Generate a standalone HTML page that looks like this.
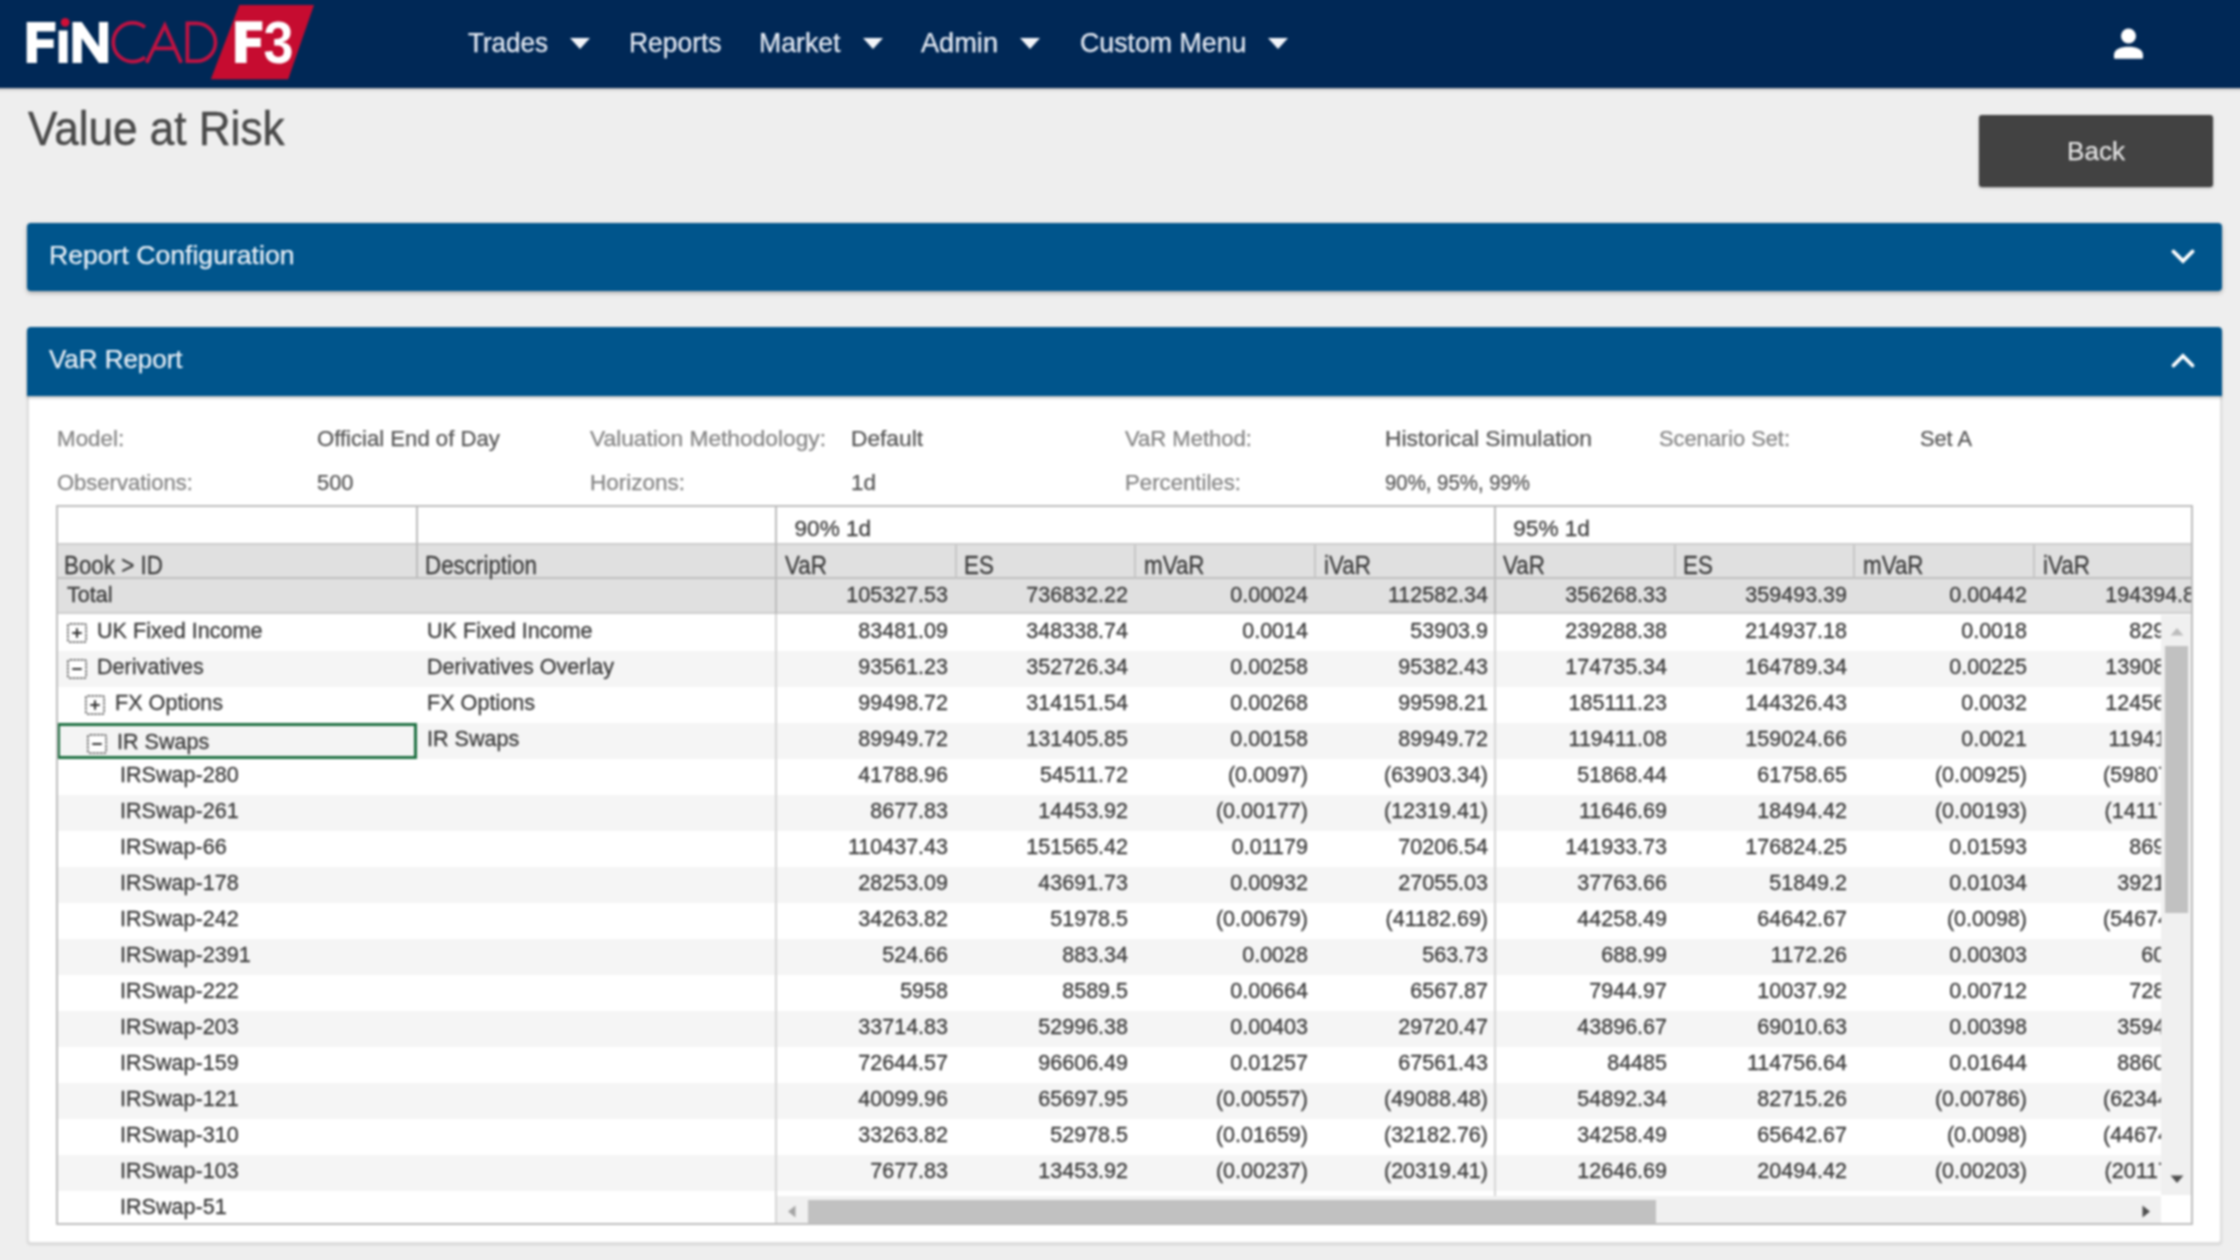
<!DOCTYPE html>
<html><head><meta charset="utf-8"><title>Value at Risk</title>
<style>
html,body{margin:0;padding:0;width:2240px;height:1260px;overflow:hidden}
body{width:2240px;height:1260px;overflow:hidden;background:#eeeeee;font-family:"Liberation Sans",sans-serif;position:relative}
.a{position:absolute;display:block}
.t{position:absolute;white-space:pre;line-height:1;transform-origin:0 50%;display:block;-webkit-text-stroke:0.25px currentColor}
.d{position:absolute;white-space:pre;line-height:1;font-size:22.2px;color:#3a3a3a;-webkit-text-stroke:0.3px #3a3a3a;display:block;transform:scaleX(0.9730);transform-origin:0 50%}
.h{position:absolute;white-space:pre;line-height:1;font-size:25px;color:#3c3c3c;-webkit-text-stroke:0.3px #3c3c3c;display:block;transform-origin:0 50%}
.r{text-align:right;width:200px}
.n{font-size:22px;transform:scaleX(0.9773);transform-origin:100% 50%}
#v{position:absolute;left:0;top:0;width:2240px;height:1260px;overflow:hidden}
#w{position:absolute;left:-50px;top:-50px;width:2340px;height:1360px;background:#eeeeee;filter:blur(0.9px)}
#c{position:absolute;left:50px;top:50px;width:2240px;height:1260px}
</style></head><body>
<div id="v"><div id="w"><div id="c">
<!-- NAVBAR -->
<div class="a" style="left:-50px;top:-50px;width:2340px;height:137.5px;background:#002856;box-shadow:0 1px 3px rgba(0,0,0,.35)"></div>
<svg class="a" style="left:0;top:0" width="340" height="87" viewBox="0 0 340 87">
  <path d="M239.3 5H314L288.2 79.2H210.8Z" fill="#c60c30"/>
  <g fill="#ffffff">
    <path d="M26.7 22H55.4V31.4H36.9V39.3H53.7V48H36.9V63H26.7Z"/>
    <path d="M58.6 30.5H67.6V63H58.6Z"/>
    <path d="M72.5 22H81.8L98.9 46.8V22H108.1V63H98.9L81.8 38.2V63H72.5Z"/>
    <path d="M235.2 21.3H262.3V30.6H246.6V38H260.8V46.9H246.6V63H235.2Z"/>
  </g>
  <circle cx="65.2" cy="22.3" r="4.4" fill="#d00f37"/>
  <g fill="none" stroke="#bf1242" stroke-width="3.7">
    <path d="M145 27.3A19.4 19.4 0 1 0 145 57.3"/>
    <path d="M146.6 62.8L164.8 25.4L181.2 62.8M153.6 48.4H176.2" stroke-linejoin="miter"/>
    <path d="M187.4 23.4V61.2H196.6A18.9 18.9 0 0 0 196.6 23.4Z"/>
  </g>
  <text x="263.6" y="63" font-family="Liberation Sans, sans-serif" font-weight="700" font-size="58.5" fill="#ffffff" textLength="30" lengthAdjust="spacingAndGlyphs">3</text>
</svg>
<svg class="a" style="left:570px;top:37.5px" width="20" height="11" viewBox="0 0 20 11"><path d="M0 0H20L10 11Z" fill="#f2f5fa"/></svg><svg class="a" style="left:862.5px;top:37.5px" width="20" height="11" viewBox="0 0 20 11"><path d="M0 0H20L10 11Z" fill="#f2f5fa"/></svg><svg class="a" style="left:1020.3px;top:37.5px" width="20" height="11" viewBox="0 0 20 11"><path d="M0 0H20L10 11Z" fill="#f2f5fa"/></svg><svg class="a" style="left:1267.7px;top:37.5px" width="20" height="11" viewBox="0 0 20 11"><path d="M0 0H20L10 11Z" fill="#f2f5fa"/></svg>
<svg class="a" style="left:2112px;top:26px" width="34" height="36" viewBox="0 0 34 36"><circle cx="16.5" cy="10" r="7.5" fill="#fff"/><path d="M2 31.5V29C2 23 9 20.7 16.5 20.7S31 23 31 29V31.5Q31 32.7 30 32.7H3Q2 32.7 2 31.5Z" fill="#fff"/></svg>
<!-- BACK BUTTON -->
<div class="a" style="left:1979px;top:115px;width:234px;height:72px;background:#424242;border-radius:3px;box-shadow:0 1px 3px rgba(0,0,0,.3)"></div>
<!-- PANEL 1 -->
<div class="a" style="left:27px;top:223px;width:2195px;height:68px;background:#00558c;border-radius:4px;box-shadow:0 2px 4px rgba(0,0,0,.3)"></div>
<svg class="a" style="left:2170px;top:247px" width="26" height="20" viewBox="0 0 26 20"><path d="M3.5 4.5L13 14L22.5 4.5" fill="none" stroke="#fff" stroke-width="3.8" stroke-linecap="round"/></svg>
<!-- PANEL 2 -->
<div class="a" style="left:27px;top:330px;width:2195px;height:914px;background:#fff;border-radius:0 0 4px 4px;border:2px solid #dedede;box-sizing:border-box;box-shadow:0 1px 2px rgba(0,0,0,.12)"></div>
<div class="a" style="left:27px;top:327px;width:2195px;height:68.5px;background:#00558c;border-radius:4px 4px 0 0;box-shadow:0 2px 3px rgba(0,0,0,.25)"></div>
<svg class="a" style="left:2170px;top:350px" width="26" height="20" viewBox="0 0 26 20"><path d="M3.5 15.5L13 6L22.5 15.5" fill="none" stroke="#fff" stroke-width="3.8" stroke-linecap="round"/></svg>
<span class="t" style="left:468.0px;top:29px;font-size:27.5px;color:#e6ecf5;font-weight:400;transform:scaleX(0.9459)">Trades</span><span class="t" style="left:629.0px;top:29px;font-size:27.5px;color:#e6ecf5;font-weight:400;transform:scaleX(0.9606)">Reports</span><span class="t" style="left:759.0px;top:29px;font-size:27.5px;color:#e6ecf5;font-weight:400;transform:scaleX(0.9697)">Market</span><span class="t" style="left:921.0px;top:29px;font-size:27.5px;color:#e6ecf5;font-weight:400;transform:scaleX(0.9878)">Admin</span><span class="t" style="left:1079.5px;top:29px;font-size:27.5px;color:#e6ecf5;font-weight:400;transform:scaleX(0.9726)">Custom Menu</span><span class="t" style="left:28.0px;top:105px;font-size:48px;color:#4a4a4a;font-weight:400;transform:scaleX(0.9186);-webkit-text-stroke-width:0.5px">Value at Risk</span><span class="t" style="left:2067.0px;top:138px;font-size:26.5px;color:#e4e4e4;font-weight:400;transform:scaleX(0.9844)">Back</span><span class="t" style="left:49.0px;top:242px;font-size:26px;color:#e9f0f7;font-weight:400;transform:scaleX(1.0232)">Report Configuration</span><span class="t" style="left:49.0px;top:346px;font-size:26px;color:#e9f0f7;font-weight:400;transform:scaleX(0.9968)">VaR Report</span><span class="t" style="left:56.5px;top:428px;font-size:22px;color:#848484;font-weight:400;transform:scaleX(1.0175)">Model:</span><span class="t" style="left:317.0px;top:428px;font-size:22px;color:#555555;font-weight:400;transform:scaleX(1.0055)">Official End of Day</span><span class="t" style="left:590.0px;top:428px;font-size:22px;color:#848484;font-weight:400;transform:scaleX(1.0337)">Valuation Methodology:</span><span class="t" style="left:851.0px;top:428px;font-size:22px;color:#555555;font-weight:400;transform:scaleX(1.0327)">Default</span><span class="t" style="left:1125.0px;top:428px;font-size:22px;color:#848484;font-weight:400;transform:scaleX(1.0017)">VaR Method:</span><span class="t" style="left:1385.0px;top:428px;font-size:22px;color:#555555;font-weight:400;transform:scaleX(1.0387)">Historical Simulation</span><span class="t" style="left:1659.0px;top:428px;font-size:22px;color:#848484;font-weight:400;transform:scaleX(0.9918)">Scenario Set:</span><span class="t" style="left:1920.0px;top:428px;font-size:22px;color:#555555;font-weight:400;transform:scaleX(0.9887)">Set A</span><span class="t" style="left:56.5px;top:472px;font-size:22px;color:#848484;font-weight:400;transform:scaleX(1.0005)">Observations:</span><span class="t" style="left:317.0px;top:472px;font-size:22px;color:#555555;font-weight:400;transform:scaleX(0.9940)">500</span><span class="t" style="left:590.0px;top:472px;font-size:22px;color:#848484;font-weight:400;transform:scaleX(1.0224)">Horizons:</span><span class="t" style="left:851.0px;top:472px;font-size:22px;color:#555555;font-weight:400;transform:scaleX(1.0211)">1d</span><span class="t" style="left:1125.0px;top:472px;font-size:22px;color:#848484;font-weight:400;transform:scaleX(1.0091)">Percentiles:</span><span class="t" style="left:1385.0px;top:472px;font-size:22px;color:#555555;font-weight:400;transform:scaleX(0.9262)">90%, 95%, 99%</span>
<!-- TABLE -->
<div class="a" style="left:56px;top:505px;width:2137px;height:719px;background:#fff"></div>
<div class="a" style="left:0;top:0;width:2192px;height:1223.5px;overflow:hidden">
<div class="a" style="left:57px;top:614.5px;width:2135px;height:36px;background:#ffffff"></div><div class="a" style="left:57px;top:650.5px;width:2135px;height:36px;background:#f5f5f5"></div><div class="a" style="left:57px;top:686.5px;width:2135px;height:36px;background:#ffffff"></div><div class="a" style="left:57px;top:722.5px;width:2135px;height:36px;background:#f5f5f5"></div><div class="a" style="left:57px;top:758.5px;width:2135px;height:36px;background:#ffffff"></div><div class="a" style="left:57px;top:794.5px;width:2135px;height:36px;background:#f5f5f5"></div><div class="a" style="left:57px;top:830.5px;width:2135px;height:36px;background:#ffffff"></div><div class="a" style="left:57px;top:866.5px;width:2135px;height:36px;background:#f5f5f5"></div><div class="a" style="left:57px;top:902.5px;width:2135px;height:36px;background:#ffffff"></div><div class="a" style="left:57px;top:938.5px;width:2135px;height:36px;background:#f5f5f5"></div><div class="a" style="left:57px;top:974.5px;width:2135px;height:36px;background:#ffffff"></div><div class="a" style="left:57px;top:1010.5px;width:2135px;height:36px;background:#f5f5f5"></div><div class="a" style="left:57px;top:1046.5px;width:2135px;height:36px;background:#ffffff"></div><div class="a" style="left:57px;top:1082.5px;width:2135px;height:36px;background:#f5f5f5"></div><div class="a" style="left:57px;top:1118.5px;width:2135px;height:36px;background:#ffffff"></div><div class="a" style="left:57px;top:1154.5px;width:2135px;height:36px;background:#f5f5f5"></div><div class="a" style="left:57px;top:1190.5px;width:2135px;height:36px;background:#ffffff"></div>
<div class="a" style="left:57px;top:722.5px;width:360px;height:36px;box-sizing:border-box;border:3.2px solid #1f7042;background:#f4f4f4"></div>
<div class="a" style="left:0;top:0;width:2160.5px;height:1196px;overflow:hidden">
<span class="d r n" style="left:748.4px;top:620px">83481.09</span><span class="d r n" style="left:928.2px;top:620px">348338.74</span><span class="d r n" style="left:1108.0px;top:620px">0.0014</span><span class="d r n" style="left:1287.8px;top:620px">53903.9</span><span class="d r n" style="left:1467.4px;top:620px">239288.38</span><span class="d r n" style="left:1647.2px;top:620px">214937.18</span><span class="d r n" style="left:1827.0px;top:620px">0.0018</span><span class="d r n" style="left:2006.9px;top:620px">82934.5</span><span class="d r n" style="left:748.4px;top:656px">93561.23</span><span class="d r n" style="left:928.2px;top:656px">352726.34</span><span class="d r n" style="left:1108.0px;top:656px">0.00258</span><span class="d r n" style="left:1287.8px;top:656px">95382.43</span><span class="d r n" style="left:1467.4px;top:656px">174735.34</span><span class="d r n" style="left:1647.2px;top:656px">164789.34</span><span class="d r n" style="left:1827.0px;top:656px">0.00225</span><span class="d r n" style="left:2006.9px;top:656px">139081.23</span><span class="d r n" style="left:748.4px;top:692px">99498.72</span><span class="d r n" style="left:928.2px;top:692px">314151.54</span><span class="d r n" style="left:1108.0px;top:692px">0.00268</span><span class="d r n" style="left:1287.8px;top:692px">99598.21</span><span class="d r n" style="left:1467.4px;top:692px">185111.23</span><span class="d r n" style="left:1647.2px;top:692px">144326.43</span><span class="d r n" style="left:1827.0px;top:692px">0.0032</span><span class="d r n" style="left:2006.9px;top:692px">124561.23</span><span class="d r n" style="left:748.4px;top:728px">89949.72</span><span class="d r n" style="left:928.2px;top:728px">131405.85</span><span class="d r n" style="left:1108.0px;top:728px">0.00158</span><span class="d r n" style="left:1287.8px;top:728px">89949.72</span><span class="d r n" style="left:1467.4px;top:728px">119411.08</span><span class="d r n" style="left:1647.2px;top:728px">159024.66</span><span class="d r n" style="left:1827.0px;top:728px">0.0021</span><span class="d r n" style="left:2006.9px;top:728px">119411.08</span><span class="d r n" style="left:748.4px;top:764px">41788.96</span><span class="d r n" style="left:928.2px;top:764px">54511.72</span><span class="d r n" style="left:1108.0px;top:764px">(0.0097)</span><span class="d r n" style="left:1287.8px;top:764px">(63903.34)</span><span class="d r n" style="left:1467.4px;top:764px">51868.44</span><span class="d r n" style="left:1647.2px;top:764px">61758.65</span><span class="d r n" style="left:1827.0px;top:764px">(0.00925)</span><span class="d r n" style="left:2006.9px;top:764px">(59807.34)</span><span class="d r n" style="left:748.4px;top:800px">8677.83</span><span class="d r n" style="left:928.2px;top:800px">14453.92</span><span class="d r n" style="left:1108.0px;top:800px">(0.00177)</span><span class="d r n" style="left:1287.8px;top:800px">(12319.41)</span><span class="d r n" style="left:1467.4px;top:800px">11646.69</span><span class="d r n" style="left:1647.2px;top:800px">18494.42</span><span class="d r n" style="left:1827.0px;top:800px">(0.00193)</span><span class="d r n" style="left:2006.9px;top:800px">(14117.41)</span><span class="d r n" style="left:748.4px;top:836px">110437.43</span><span class="d r n" style="left:928.2px;top:836px">151565.42</span><span class="d r n" style="left:1108.0px;top:836px">0.01179</span><span class="d r n" style="left:1287.8px;top:836px">70206.54</span><span class="d r n" style="left:1467.4px;top:836px">141933.73</span><span class="d r n" style="left:1647.2px;top:836px">176824.25</span><span class="d r n" style="left:1827.0px;top:836px">0.01593</span><span class="d r n" style="left:2006.9px;top:836px">86912.5</span><span class="d r n" style="left:748.4px;top:872px">28253.09</span><span class="d r n" style="left:928.2px;top:872px">43691.73</span><span class="d r n" style="left:1108.0px;top:872px">0.00932</span><span class="d r n" style="left:1287.8px;top:872px">27055.03</span><span class="d r n" style="left:1467.4px;top:872px">37763.66</span><span class="d r n" style="left:1647.2px;top:872px">51849.2</span><span class="d r n" style="left:1827.0px;top:872px">0.01034</span><span class="d r n" style="left:2006.9px;top:872px">39215.03</span><span class="d r n" style="left:748.4px;top:908px">34263.82</span><span class="d r n" style="left:928.2px;top:908px">51978.5</span><span class="d r n" style="left:1108.0px;top:908px">(0.00679)</span><span class="d r n" style="left:1287.8px;top:908px">(41182.69)</span><span class="d r n" style="left:1467.4px;top:908px">44258.49</span><span class="d r n" style="left:1647.2px;top:908px">64642.67</span><span class="d r n" style="left:1827.0px;top:908px">(0.0098)</span><span class="d r n" style="left:2006.9px;top:908px">(54674.69)</span><span class="d r n" style="left:748.4px;top:944px">524.66</span><span class="d r n" style="left:928.2px;top:944px">883.34</span><span class="d r n" style="left:1108.0px;top:944px">0.0028</span><span class="d r n" style="left:1287.8px;top:944px">563.73</span><span class="d r n" style="left:1467.4px;top:944px">688.99</span><span class="d r n" style="left:1647.2px;top:944px">1172.26</span><span class="d r n" style="left:1827.0px;top:944px">0.00303</span><span class="d r n" style="left:2006.9px;top:944px">603.73</span><span class="d r n" style="left:748.4px;top:980px">5958</span><span class="d r n" style="left:928.2px;top:980px">8589.5</span><span class="d r n" style="left:1108.0px;top:980px">0.00664</span><span class="d r n" style="left:1287.8px;top:980px">6567.87</span><span class="d r n" style="left:1467.4px;top:980px">7944.97</span><span class="d r n" style="left:1647.2px;top:980px">10037.92</span><span class="d r n" style="left:1827.0px;top:980px">0.00712</span><span class="d r n" style="left:2006.9px;top:980px">7287.87</span><span class="d r n" style="left:748.4px;top:1016px">33714.83</span><span class="d r n" style="left:928.2px;top:1016px">52996.38</span><span class="d r n" style="left:1108.0px;top:1016px">0.00403</span><span class="d r n" style="left:1287.8px;top:1016px">29720.47</span><span class="d r n" style="left:1467.4px;top:1016px">43896.67</span><span class="d r n" style="left:1647.2px;top:1016px">69010.63</span><span class="d r n" style="left:1827.0px;top:1016px">0.00398</span><span class="d r n" style="left:2006.9px;top:1016px">35947.47</span><span class="d r n" style="left:748.4px;top:1052px">72644.57</span><span class="d r n" style="left:928.2px;top:1052px">96606.49</span><span class="d r n" style="left:1108.0px;top:1052px">0.01257</span><span class="d r n" style="left:1287.8px;top:1052px">67561.43</span><span class="d r n" style="left:1467.4px;top:1052px">84485</span><span class="d r n" style="left:1647.2px;top:1052px">114756.64</span><span class="d r n" style="left:1827.0px;top:1052px">0.01644</span><span class="d r n" style="left:2006.9px;top:1052px">88607.43</span><span class="d r n" style="left:748.4px;top:1088px">40099.96</span><span class="d r n" style="left:928.2px;top:1088px">65697.95</span><span class="d r n" style="left:1108.0px;top:1088px">(0.00557)</span><span class="d r n" style="left:1287.8px;top:1088px">(49088.48)</span><span class="d r n" style="left:1467.4px;top:1088px">54892.34</span><span class="d r n" style="left:1647.2px;top:1088px">82715.26</span><span class="d r n" style="left:1827.0px;top:1088px">(0.00786)</span><span class="d r n" style="left:2006.9px;top:1088px">(62344.48)</span><span class="d r n" style="left:748.4px;top:1124px">33263.82</span><span class="d r n" style="left:928.2px;top:1124px">52978.5</span><span class="d r n" style="left:1108.0px;top:1124px">(0.01659)</span><span class="d r n" style="left:1287.8px;top:1124px">(32182.76)</span><span class="d r n" style="left:1467.4px;top:1124px">34258.49</span><span class="d r n" style="left:1647.2px;top:1124px">65642.67</span><span class="d r n" style="left:1827.0px;top:1124px">(0.0098)</span><span class="d r n" style="left:2006.9px;top:1124px">(44674.76)</span><span class="d r n" style="left:748.4px;top:1160px">7677.83</span><span class="d r n" style="left:928.2px;top:1160px">13453.92</span><span class="d r n" style="left:1108.0px;top:1160px">(0.00237)</span><span class="d r n" style="left:1287.8px;top:1160px">(20319.41)</span><span class="d r n" style="left:1467.4px;top:1160px">12646.69</span><span class="d r n" style="left:1647.2px;top:1160px">20494.42</span><span class="d r n" style="left:1827.0px;top:1160px">(0.00203)</span><span class="d r n" style="left:2006.9px;top:1160px">(20117.41)</span>
</div>
<svg class="a" style="left:66.5px;top:622.5px" width="20" height="20" viewBox="0 0 19 19"><rect x="0.8" y="0.8" width="17.4" height="17.4" rx="2" fill="#fff" stroke="#666" stroke-width="1.7" stroke-dasharray="2.4 1"/><path d="M5 9.5H14" stroke="#333" stroke-width="1.9" fill="none"/><path d="M9.5 5V14" stroke="#333" stroke-width="1.9" fill="none"/></svg><span class="d" style="left:97px;top:620px">UK Fixed Income</span><span class="d" style="left:426.5px;top:620px">UK Fixed Income</span><svg class="a" style="left:66.5px;top:658.5px" width="20" height="20" viewBox="0 0 19 19"><rect x="0.8" y="0.8" width="17.4" height="17.4" rx="2" fill="#fff" stroke="#666" stroke-width="1.7" stroke-dasharray="2.4 1"/><path d="M5 9.5H14" stroke="#333" stroke-width="1.9" fill="none"/></svg><span class="d" style="left:97px;top:656px">Derivatives</span><span class="d" style="left:426.5px;top:656px">Derivatives Overlay</span><svg class="a" style="left:84.5px;top:694.5px" width="20" height="20" viewBox="0 0 19 19"><rect x="0.8" y="0.8" width="17.4" height="17.4" rx="2" fill="#fff" stroke="#666" stroke-width="1.7" stroke-dasharray="2.4 1"/><path d="M5 9.5H14" stroke="#333" stroke-width="1.9" fill="none"/><path d="M9.5 5V14" stroke="#333" stroke-width="1.9" fill="none"/></svg><span class="d" style="left:115.3px;top:692px">FX Options</span><span class="d" style="left:426.5px;top:692px">FX Options</span><svg class="a" style="left:86.8px;top:733.5px" width="20" height="20" viewBox="0 0 19 19"><rect x="0.8" y="0.8" width="17.4" height="17.4" rx="2" fill="#fff" stroke="#666" stroke-width="1.7" stroke-dasharray="2.4 1"/><path d="M5 9.5H14" stroke="#333" stroke-width="1.9" fill="none"/></svg><span class="d" style="left:117.4px;top:731px">IR Swaps</span><span class="d" style="left:426.5px;top:728px">IR Swaps</span><span class="d" style="left:120.4px;top:764px">IRSwap-280</span><span class="d" style="left:120.4px;top:800px">IRSwap-261</span><span class="d" style="left:120.4px;top:836px">IRSwap-66</span><span class="d" style="left:120.4px;top:872px">IRSwap-178</span><span class="d" style="left:120.4px;top:908px">IRSwap-242</span><span class="d" style="left:120.4px;top:944px">IRSwap-2391</span><span class="d" style="left:120.4px;top:980px">IRSwap-222</span><span class="d" style="left:120.4px;top:1016px">IRSwap-203</span><span class="d" style="left:120.4px;top:1052px">IRSwap-159</span><span class="d" style="left:120.4px;top:1088px">IRSwap-121</span><span class="d" style="left:120.4px;top:1124px">IRSwap-310</span><span class="d" style="left:120.4px;top:1160px">IRSwap-103</span><span class="d" style="left:120.4px;top:1196px">IRSwap-51</span>
<!-- header rows -->
<div class="a" style="left:57px;top:543px;width:2135px;height:35.5px;background:#e0e0e0;border-top:2px solid #cdcdcd;box-sizing:border-box"></div>
<div class="a" style="left:57px;top:577.2px;width:2135px;height:37.3px;background:#e0e0e0;border-top:2.2px solid #c0c0c0;border-bottom:2px solid #cecece;box-sizing:border-box"></div>
<span class="h" style="left:64.4px;top:553px;transform:scaleX(0.8951)">Book > ID</span><span class="h" style="left:424.6px;top:553px;transform:scaleX(0.8951)">Description</span><span class="h" style="left:784.6px;top:553px;transform:scaleX(0.8951)">VaR</span><span class="h" style="left:964.0px;top:553px;transform:scaleX(0.8951)">ES</span><span class="h" style="left:1143.8px;top:553px;transform:scaleX(0.8951)">mVaR</span><span class="h" style="left:1323.6px;top:553px;transform:scaleX(0.8951)">iVaR</span><span class="h" style="left:1503.4px;top:553px;transform:scaleX(0.8951)">VaR</span><span class="h" style="left:1683.0px;top:553px;transform:scaleX(0.8951)">ES</span><span class="h" style="left:1862.8px;top:553px;transform:scaleX(0.8951)">mVaR</span><span class="h" style="left:2042.6px;top:553px;transform:scaleX(0.8951)">iVaR</span><span class="d" style="left:794.5px;top:518px;font-size:22.6px;color:#444;transform:none">90% 1d</span><span class="d" style="left:1513.3px;top:518px;font-size:22.6px;color:#444;transform:none">95% 1d</span><span class="d" style="left:66.8px;top:584px">Total</span><span class="d r n" style="left:748.4px;top:584px">105327.53</span><span class="d r n" style="left:928.2px;top:584px">736832.22</span><span class="d r n" style="left:1108.0px;top:584px">0.00024</span><span class="d r n" style="left:1287.8px;top:584px">112582.34</span><span class="d r n" style="left:1467.4px;top:584px">356268.33</span><span class="d r n" style="left:1647.2px;top:584px">359493.39</span><span class="d r n" style="left:1827.0px;top:584px">0.00442</span><span class="d r n" style="left:2006.7px;top:584px">194394.82</span>
<div class="a" style="left:416px;top:506px;width:2px;height:72px;background:#bcbcbc"></div><div class="a" style="left:775.2px;top:506px;width:2px;height:108px;background:#bcbcbc"></div><div class="a" style="left:775.2px;top:614px;width:2px;height:610px;background:#d6d6d6"></div><div class="a" style="left:1493.8px;top:506px;width:2px;height:108px;background:#bcbcbc"></div><div class="a" style="left:1493.8px;top:614px;width:2px;height:582px;background:#d6d6d6"></div><div class="a" style="left:954.6px;top:545px;width:2px;height:33px;background:#c6c6c6"></div><div class="a" style="left:1134.4px;top:545px;width:2px;height:33px;background:#c6c6c6"></div><div class="a" style="left:1314.2px;top:545px;width:2px;height:33px;background:#c6c6c6"></div><div class="a" style="left:1673.6px;top:545px;width:2px;height:33px;background:#c6c6c6"></div><div class="a" style="left:1853.4px;top:545px;width:2px;height:33px;background:#c6c6c6"></div><div class="a" style="left:2033.2px;top:545px;width:2px;height:33px;background:#c6c6c6"></div>
<div class="a" style="left:2160.5px;top:614.5px;width:31.5px;height:580.5px;background:#f0f0f0"></div><div class="a" style="left:2160.5px;top:1195px;width:31.5px;height:28.5px;background:#fff"></div><div class="a" style="left:2165.3px;top:646px;width:22.6px;height:267px;background:#c1c1c1"></div><svg class="a" style="left:2169.5px;top:627px" width="14" height="9" viewBox="0 0 14 9"><path d="M0.5 8.5H13.5L7 1Z" fill="#bcbcbc"/></svg><svg class="a" style="left:2169.5px;top:1174.5px" width="14" height="9" viewBox="0 0 14 9"><path d="M0.5 0.5H13.5L7 8Z" fill="#4f4f4f"/></svg><div class="a" style="left:776.5px;top:1195.7px;width:1384px;height:27.8px;background:#f0f0f0"></div><div class="a" style="left:807.5px;top:1199.6px;width:848px;height:23.9px;background:#c1c1c1"></div><svg class="a" style="left:787px;top:1204.5px" width="9" height="13" viewBox="0 0 9 13"><path d="M8.5 0.5V12.5L1 6.5Z" fill="#a5a5a5"/></svg><svg class="a" style="left:2141.5px;top:1204.5px" width="9" height="13" viewBox="0 0 9 13"><path d="M0.5 0.5V12.5L8 6.5Z" fill="#4f4f4f"/></svg>
</div>
<div class="a" style="left:56px;top:505px;width:2137px;height:719.5px;box-sizing:border-box;border:2px solid #bebebe"></div>
</div></div></div>
</body></html>
